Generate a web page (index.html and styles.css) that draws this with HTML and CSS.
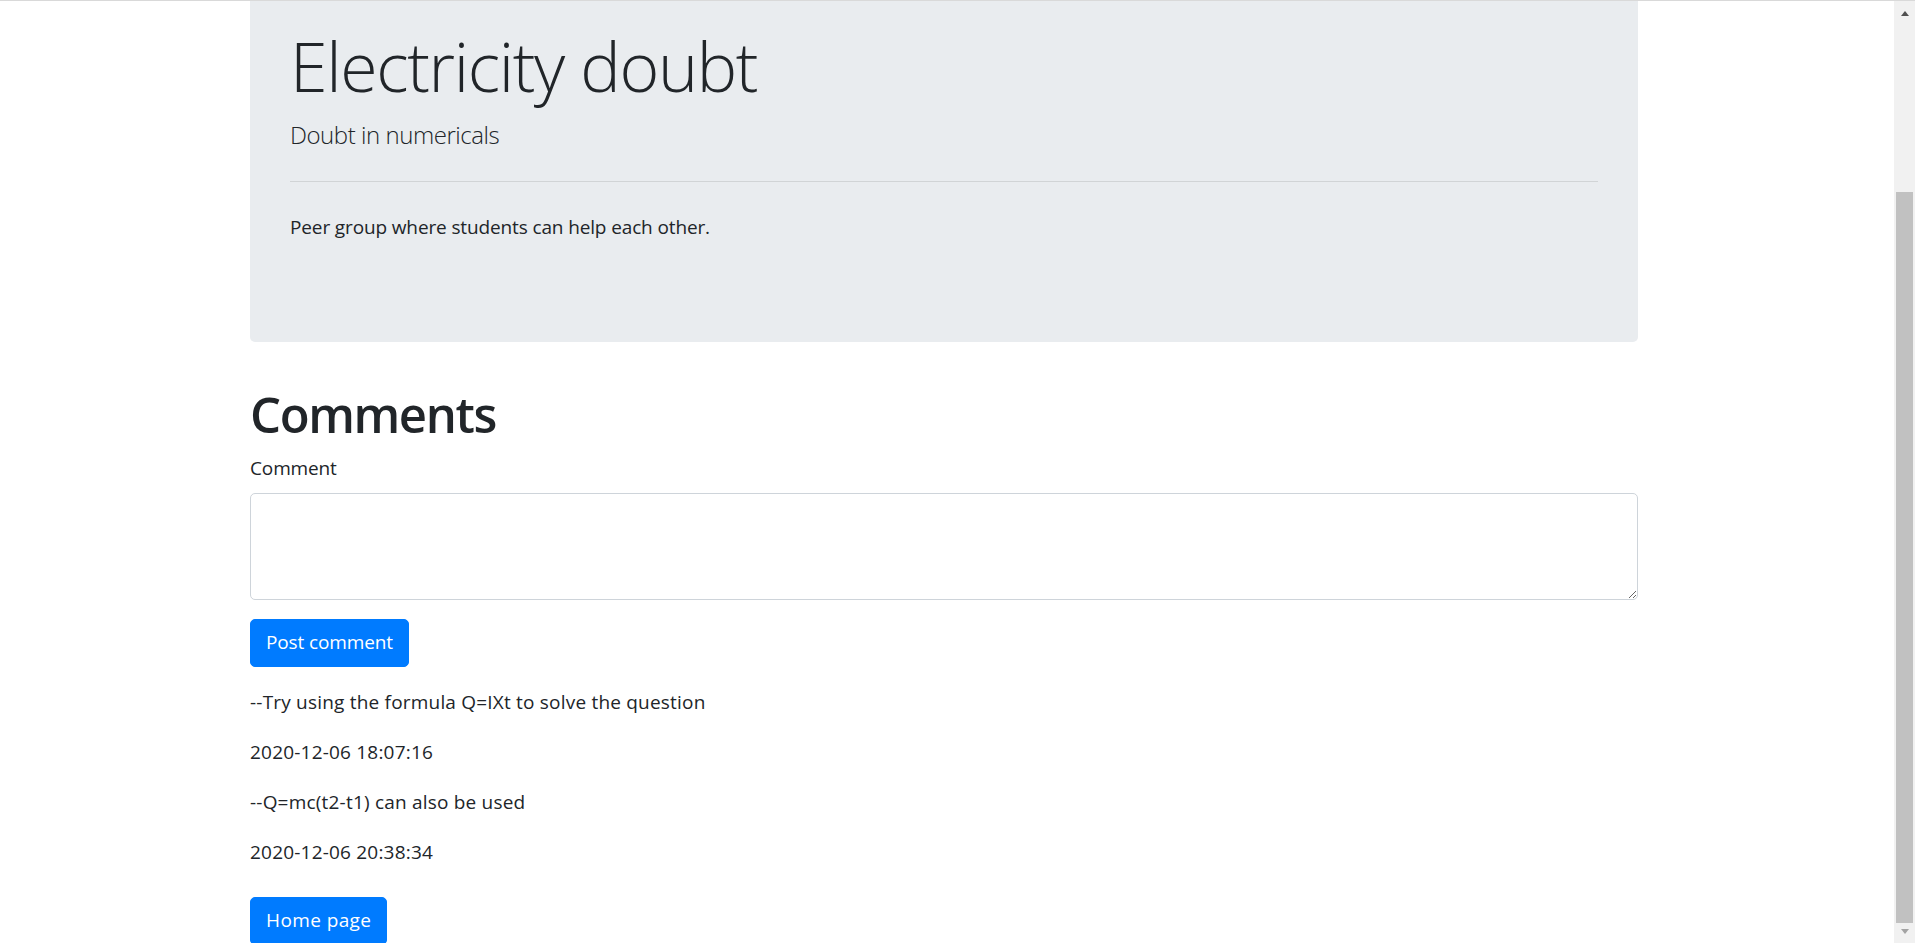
FILE: index.html
```html
<!DOCTYPE html>
<html lang="en">
<head>
<meta charset="utf-8">
<title>Electricity doubt</title>
<link rel="stylesheet" href="styles.css">
</head>
<body>
<div class="topline"></div>
<div class="frame">
  <main class="viewport">
    <div class="container">
      <section class="jumbotron">
        <h1 class="display-4">Electricity doubt</h1>
        <p class="lead">Doubt in numericals</p>
        <hr class="divider">
        <p class="text">Peer group where students can help each other.</p>
      </section>

      <h1 class="section-title">Comments</h1>
      <form class="comment-form">
        <div class="form-group">
          <label class="field-label" for="comment">Comment</label>
          <textarea class="field" id="comment" rows="3"></textarea>
        </div>
        <button class="btn" type="button">Post comment</button>
      </form>

      <p class="text comment-text">--Try using the formula Q=IXt to solve the question</p>
      <p class="text comment-text">2020-12-06 18:07:16</p>
      <p class="text comment-text">--Q=mc(t2-t1) can also be used</p>
      <p class="text comment-text">2020-12-06 20:38:34</p>

      <div class="home-row"><a class="btn btn-home" href="#">Home page</a></div>
    </div>
  </main>
  <div class="scrollbar">
    <div class="sb-button"><span class="arrow-up"></span></div>
    <div class="sb-track"><div class="sb-thumb"></div></div>
    <div class="sb-button sb-button-down"><span class="arrow-down"></span></div>
  </div>
</div>
</body>
</html>
```

FILE: styles.css
```css
* {
  box-sizing: border-box;
}

html, body {
  margin: 0;
  height: 943px;
  overflow: hidden;
  background: #ffffff;
}

body {
  font-family: "Open Sans", "Noto Sans", "Liberation Sans", sans-serif;
  font-size: 19px;
  letter-spacing: -0.13px;
  line-height: 30px;
  color: #212529;
}

.topline {
  height: 1px;
  background: #d9d9d9;
}

.frame {
  display: flex;
  height: 942px;
}

.viewport {
  flex: 1;
  overflow: hidden;
  padding-right: 6px;
}

.container {
  width: 1388px;
  margin: 0 auto;
}

.jumbotron {
  background: #e9ecef;
  padding: 18px 40px 80px;
  border-radius: 0 0 5px 5px;
  margin-bottom: 42px;
}

.display-4 {
  margin: 5px 0 8px;
  font-size: 68px;
  letter-spacing: -1.35px;
  line-height: 84px;
  font-weight: 300;
}

.lead {
  margin: 0;
  font-size: 24px;
  letter-spacing: -0.45px;
  line-height: 37.5px;
  font-weight: 300;
}

.divider {
  margin: 27px 0 30px;
  border: 0;
  border-top: 1px solid rgba(0, 0, 0, 0.1);
  height: 0;
}

.text {
  margin: 0 0 20px;
}

.comment-text {
  letter-spacing: 0.2px;
}

.section-title {
  margin: 0 0 9px;
  font-size: 49px;
  letter-spacing: -1.4px;
  line-height: 60px;
  font-weight: 600;
}

.comment-form {
  display: flex;
  flex-direction: column;
  align-items: flex-start;
  margin-bottom: 20px;
}

.form-group {
  align-self: stretch;
  margin-bottom: 19px;
}

.field-label {
  display: block;
  margin-bottom: 10px;
}

.field {
  display: block;
  width: 100%;
  height: 107px;
  padding: 7.5px 15px;
  font: inherit;
  color: #495057;
  background: #fff;
  border: 1px solid #ced4da;
  border-radius: 5px;
  resize: vertical;
  outline: none;
}

.btn {
  display: inline-block;
  padding: 8.5px 15px;
  font-family: inherit;
  font-size: 19px;
  letter-spacing: -0.13px;
  line-height: 29px;
  color: #ffffff;
  background: #007bff;
  border: 1px solid #007bff;
  border-radius: 5px;
  text-decoration: none;
  cursor: pointer;
}

.btn-home {
  letter-spacing: 0.4px;
}

.home-row {
  padding-top: 10px;
}

.scrollbar {
  width: 21px;
  flex: none;
  background: #f1f1f1;
  display: flex;
  flex-direction: column;
}

.sb-button {
  height: 20px;
  display: flex;
  justify-content: center;
  padding-top: 10px;
}

.sb-button-down {
  height: 19px;
  padding-top: 5px;
}

.arrow-up {
  width: 0;
  height: 0;
  border-left: 4.5px solid transparent;
  border-right: 4.5px solid transparent;
  border-bottom: 5px solid #505050;
}

.arrow-down {
  width: 0;
  height: 0;
  border-left: 4.5px solid transparent;
  border-right: 4.5px solid transparent;
  border-top: 5px solid #a3a3a3;
}

.sb-track {
  flex: 1;
  display: flex;
  flex-direction: column;
  justify-content: flex-end;
  padding: 0 2px 1px;
}

.sb-thumb {
  height: 731px;
  background: #c1c1c1;
}
```
